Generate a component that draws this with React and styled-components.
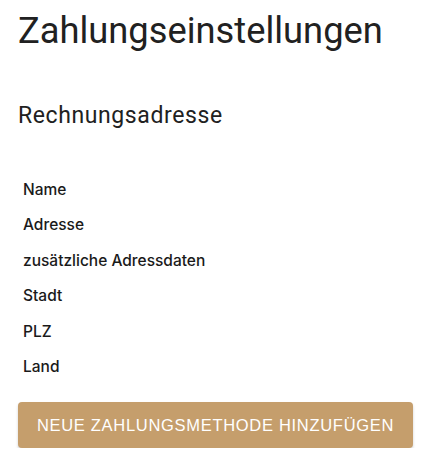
import React from "react";
import styled, { createGlobalStyle } from "styled-components";

const GlobalStyle = createGlobalStyle`
  body {
    margin: 0;
    background: #ffffff;
    font-family: Roboto, "Liberation Sans", sans-serif;
    color: #212121;
  }
`;

const Page = styled.div`
  padding: 8px 23px 0 18px;
  display: flex;
  flex-direction: column;
`;

const Title = styled.h1`
  margin: 0;
  font-family: Roboto, sans-serif;
  font-weight: 400;
  font-size: 36.3px;
  line-height: 46px;
  color: #212121;
`;

const Section = styled.h2`
  margin: 47px 0 0;
  font-family: Roboto, sans-serif;
  font-weight: 400;
  font-size: 23px;
  letter-spacing: 0.6px;
  line-height: 30px;
  color: #212121;
`;

const FieldList = styled.ul`
  list-style: none;
  margin: 41px 0 0;
  padding: 0 0 0 5px;
  display: flex;
  flex-direction: column;
`;

const Field = styled.li`
  font-family: Inter, "Liberation Sans", sans-serif;
  font-size: 15.5px;
  font-weight: 500;
  line-height: 35.4px;
  color: #1a1a1a;
`;

const AddButton = styled.button`
  margin-top: 18px;
  height: 46px;
  width: 100%;
  border: none;
  border-radius: 4px;
  background: #c59e6c;
  color: #ffffff;
  font-family: "Liberation Sans", Arial, sans-serif;
  font-size: 16.5px;
  letter-spacing: 0.7px;
  text-transform: uppercase;
  box-shadow: 0 2px 3px rgba(0, 0, 0, 0.18);
  cursor: pointer;
`;

const fields = ["Name", "Adresse", "zusätzliche Adressdaten", "Stadt", "PLZ", "Land"];

const App = () => (
  <>
    <GlobalStyle />
    <Page>
      <Title>Zahlungseinstellungen</Title>
      <Section>Rechnungsadresse</Section>
      <FieldList>
        {fields.map((f) => (
          <Field key={f}>{f}</Field>
        ))}
      </FieldList>
      <AddButton>Neue Zahlungsmethode hinzufügen</AddButton>
    </Page>
  </>
);

export default App;
